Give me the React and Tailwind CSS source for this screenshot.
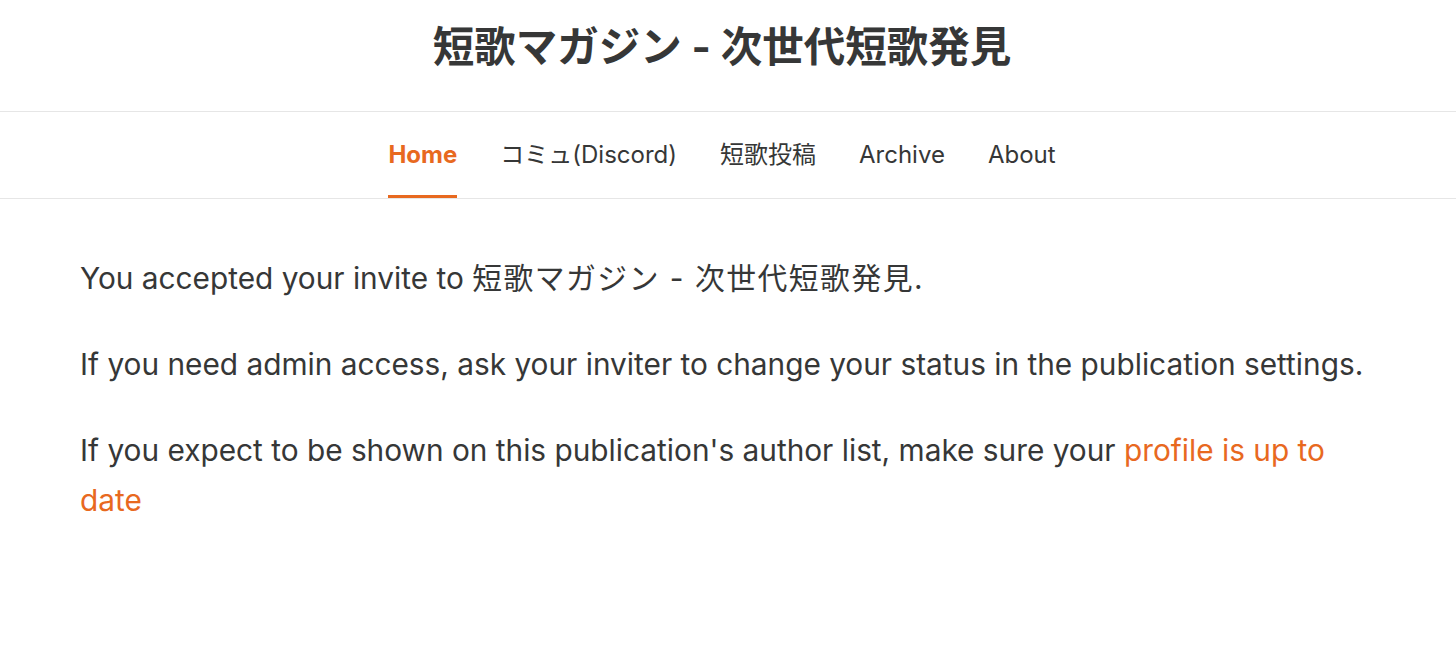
import React from 'react'

const jp = { fontFamily: 'Inter, "Noto Sans CJK JP", sans-serif' }

const tabs = ['Home', 'コミュ(Discord)', '短歌投稿', 'Archive', 'About']

export default function App() {
  return (
    <div className="min-h-screen bg-white text-[#363737]" style={jp}>
      <header className="h-[112px] border-b border-[#e6e6e6] flex justify-center pt-[21px] pr-[12px]">
        <h1 className="text-[41.5px] leading-[52px] font-bold">短歌マガジン - 次世代短歌発見</h1>
      </header>

      <nav className="h-[87px] border-b border-[#e6e6e6] flex justify-center gap-[43px] pr-[12px]">
        {tabs.map((t, i) => (
          <a
            key={t}
            className={
              'flex items-center text-[24px] border-b-[3px] pt-[3px] ' +
              (i === 0 ? 'text-[#e8691f] font-bold border-[#e8691f]' : 'border-transparent')
            }
          >
            {t}
          </a>
        ))}
      </nav>

      <main className="pl-[80px] pr-[80px] pt-[54px] text-[29.8px] leading-[50px]">
        <p className="mb-[36px]">
          You accepted your invite to <span className="tracking-[1.5px]">短歌マガジン - 次世代短歌発見</span>.
        </p>
        <p className="mb-[36px]">If you need admin access, ask your inviter to change your status in the publication settings.</p>
        <p>
          If you expect to be shown on this publication's author list, make sure your{' '}
          <a className="text-[#e8691f]">profile is up to date</a>
        </p>
      </main>
    </div>
  )
}
